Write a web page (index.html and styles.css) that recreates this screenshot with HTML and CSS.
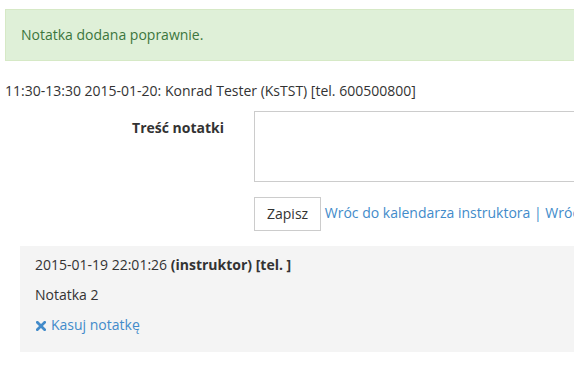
FILE: index.html
```html
<!DOCTYPE html>
<html lang="pl">
<head>
<meta charset="utf-8">
<title>Notatka</title>
<link rel="stylesheet" href="styles.css">
</head>
<body>
<div class="page">
  <div class="alert">Notatka dodana poprawnie.</div>
  <p class="meta">11:30-13:30 2015-01-20: Konrad Tester (KsTST) [tel. 600500800]</p>
  <form class="form">
    <div class="form-row">
      <label class="label" for="tresc">Treść notatki</label>
      <textarea id="tresc" class="textarea"></textarea>
    </div>
    <div class="form-row actions">
      <span></span>
      <div class="action-line">
        <button type="button" class="btn">Zapisz</button>
        <a class="link" href="#">Wróc do kalendarza instruktora</a> <span class="sep">|</span> <a class="link" href="#">Wróc do kalendarza kursanta</a>
      </div>
    </div>
  </form>
  <div class="note">
    <p class="note-line">2015-01-19 22:01:26 <strong>(instruktor) [tel. ]</strong></p>
    <p class="note-line">Notatka 2</p>
    <p class="note-line"><a class="link" href="#"><svg class="icon" width="10" height="10" viewBox="0 0 10 10" aria-hidden="true"><path d="M1.3 1.3 L8.7 8.7 M8.7 1.3 L1.3 8.7" stroke="currentColor" stroke-width="2.7" stroke-linecap="square" fill="none"/></svg>Kasuj notatkę</a></p>
  </div>
</div>
</body>
</html>
```

FILE: styles.css
```css
html {
  overflow: hidden;
}
body {
  margin: 0;
  font-family: "Open Sans", "DejaVu Sans", sans-serif;
  font-size: 14px;
  line-height: 20px;
  color: #333;
  background: #fff;
}
.page {
  width: 1000px;
  padding: 9px 0 0 5px;
}
.alert {
  background: #dff0d8;
  border: 1px solid #d6e9c6;
  color: #3c763d;
  padding: 15px;
  margin-bottom: 20px;
}
.meta {
  margin: 0 0 10px;
}
.form {
  margin: 0;
}
.form-row {
  display: grid;
  grid-template-columns: 219px 1fr;
  column-gap: 30px;
}
.label {
  text-align: right;
  font-weight: bold;
  padding-top: 7px;
}
.textarea {
  display: block;
  box-sizing: border-box;
  width: 100%;
  height: 71px;
  margin: 0;
  border: 1px solid #ccc;
  resize: none;
  font: inherit;
}
.actions {
  margin-top: 15px;
}
.action-line {
  white-space: nowrap;
}
.btn {
  box-sizing: border-box;
  height: 34px;
  padding: 6px 12px;
  border: 1px solid #ccc;
  background: #fff;
  color: #333;
  font: inherit;
  line-height: 20px;
  vertical-align: middle;
  margin: 0;
}
.link {
  color: #428bca;
  text-decoration: none;
}
.sep {
  color: #428bca;
}
.note {
  margin: 15px 0 0 15px;
  background: #f4f4f4;
  padding: 9px 15px 7px;
}
.note-line {
  margin: 0 0 10px;
}
.icon {
  display: inline-block;
  vertical-align: -1px;
  margin: 0 5px 0 1px;
}
```
